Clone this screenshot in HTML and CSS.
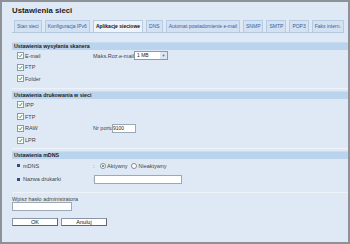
FILE: index.html
```html
<!DOCTYPE html>
<html lang="pl">
<head>
  <meta charset="UTF-8">
  <title>Ustawienia sieci</title>
  <link rel="stylesheet" href="styles.css">
</head>
<body>
  <div class="frame">
    <h1 class="title">Ustawienia sieci</h1>

    <div class="tabs">
      <span class="tab">Stan sieci</span>
      <span class="tab">Konfiguracja IPv6</span>
      <span class="tab active">Aplikacje sieciowe</span>
      <span class="tab">DNS</span>
      <span class="tab">Automat powiadomienie e-mail</span>
      <span class="tab">SNMP</span>
      <span class="tab">SMTP</span>
      <span class="tab">POP3</span>
      <span class="tab">Faks intern.</span>
    </div>

    <div class="section scan">
      <div class="section-head">Ustawienia wysyłania skanera</div>
      <div class="row">
        <span class="check"><svg width="6" height="6" viewBox="0 0 6 6"><path d="M1 3 L2.5 4.5 L5 1.2" fill="none" stroke="#2f9a2f" stroke-width="1.1"/></svg></span>
        <span class="label">E-mail</span>
        <span class="extra">Maks.Roz.e-mail</span>
        <span class="select">1 MB<span class="arrow">&#9660;</span></span>
      </div>
      <div class="row">
        <span class="check"><svg width="6" height="6" viewBox="0 0 6 6"><path d="M1 3 L2.5 4.5 L5 1.2" fill="none" stroke="#2f9a2f" stroke-width="1.1"/></svg></span>
        <span class="label">FTP</span>
      </div>
      <div class="row">
        <span class="check"><svg width="6" height="6" viewBox="0 0 6 6"><path d="M1 3 L2.5 4.5 L5 1.2" fill="none" stroke="#2f9a2f" stroke-width="1.1"/></svg></span>
        <span class="label">Folder</span>
      </div>
    </div>

    <div class="section print">
      <div class="section-head">Ustawienia drukowania w sieci</div>
      <div class="row">
        <span class="check"><svg width="6" height="6" viewBox="0 0 6 6"><path d="M1 3 L2.5 4.5 L5 1.2" fill="none" stroke="#2f9a2f" stroke-width="1.1"/></svg></span>
        <span class="label">IPP</span>
      </div>
      <div class="row">
        <span class="check"><svg width="6" height="6" viewBox="0 0 6 6"><path d="M1 3 L2.5 4.5 L5 1.2" fill="none" stroke="#2f9a2f" stroke-width="1.1"/></svg></span>
        <span class="label">FTP</span>
      </div>
      <div class="row">
        <span class="check"><svg width="6" height="6" viewBox="0 0 6 6"><path d="M1 3 L2.5 4.5 L5 1.2" fill="none" stroke="#2f9a2f" stroke-width="1.1"/></svg></span>
        <span class="label">RAW</span>
        <span class="extra port">Nr portu</span>
        <span class="field port-field">9100</span>
      </div>
      <div class="row">
        <span class="check"><svg width="6" height="6" viewBox="0 0 6 6"><path d="M1 3 L2.5 4.5 L5 1.2" fill="none" stroke="#2f9a2f" stroke-width="1.1"/></svg></span>
        <span class="label">LPR</span>
      </div>
    </div>

    <div class="section mdns">
      <div class="section-head">Ustawienia mDNS</div>
      <div class="row first">
        <span class="bullet"></span>
        <span class="label">mDNS</span>
        <span class="colon">:</span>
        <span class="radio on"></span><span class="radio-label">Aktywny</span>
        <span class="radio"></span><span class="radio-label">Nieaktywny</span>
      </div>
      <div class="row">
        <span class="bullet"></span>
        <span class="label">Nazwa drukarki</span>
        <span class="colon">:</span>
        <span class="field name-field"></span>
      </div>
    </div>

    <div class="login">
      <div class="login-label">Wpisz hasło administratora</div>
      <div class="field pass-field"></div>
      <div class="buttons">
        <span class="btn">OK</span>
        <span class="btn">Anuluj</span>
      </div>
    </div>
  </div>
</body>
</html>
```

FILE: styles.css
```css
html, body {
  margin: 0;
  padding: 0;
}
body {
  font-family: "Liberation Sans", Arial, sans-serif;
  color: #333;
  white-space: nowrap;
}
.frame {
  width: 350px;
  height: 244px;
  box-sizing: border-box;
  border: 2px solid #8d9299;
  background: #dfe9f5;
  padding-left: 10px;
  overflow: hidden;
}
.title {
  font-size: 7.8px;
  font-weight: bold;
  color: #222;
  margin: 0;
  padding-top: 3px;
  height: 14px;
  line-height: 12px;
}
.tabs {
  display: flex;
  gap: 3px;
  margin-right: 4px;
  padding-left: 2px;
  height: 13px;
  border-bottom: 1px solid #b3c7dd;
  align-items: flex-end;
}
.tab {
  flex-shrink: 0;
  font-size: 5px;
  height: 11px;
  line-height: 11px;
  padding: 0 2px;
  color: #3c5a9a;
  background: #d3e2f3;
  border: 1px solid #b5cbe2;
  border-bottom: none;
}
.tab.active {
  background: #eef3f9;
  color: #111;
  font-weight: bold;
}
.section {
  border-bottom: 1px solid #eef3fa;
}
.section-head {
  height: 7px;
  line-height: 7px;
  background: #b9d4ec;
  font-size: 5.3px;
  font-weight: bold;
  color: #222;
  padding-left: 2px;
  border-top: 1px solid #c9ddf0;
}
.scan {
  margin-top: 9px;
  padding-bottom: 3.5px;
}
.print {
  margin-top: 2px;
  padding-bottom: 2px;
}
.print .row {
  height: 11.75px;
}
.mdns {
  margin-top: 1.5px;
  padding-bottom: 6px;
}
.mdns .row {
  height: 13px;
}
.mdns .row.first {
  height: 14px;
}
.row {
  display: flex;
  align-items: center;
  height: 11.5px;
  font-size: 5.5px;
  color: #444;
  padding-left: 5px;
}
.check {
  flex-shrink: 0;
  width: 5px;
  height: 5px;
  border: 1px solid #8a9aab;
  background: #fff;
  display: flex;
  align-items: center;
  justify-content: center;
  box-sizing: content-box;
}
.check svg {
  width: 5px;
  height: 5px;
}
.label {
  margin-left: 1px;
  width: 68px;
}
.bullet {
  width: 3px;
  height: 3px;
  background: #2f4b8a;
  margin-right: 2px;
}
.mdns .label {
  width: 70px;
}
.extra {
  width: 41px;
}
.extra.port {
  width: 19px;
}
.select {
  width: 30px;
  height: 7px;
  line-height: 7px;
  border: 1px solid #8a9aab;
  background: #fff;
  padding-left: 2px;
  display: flex;
  justify-content: space-between;
  font-size: 5px;
  color: #222;
}
.arrow {
  width: 7px;
  background: #dde6f2;
  color: #5a6f99;
  font-size: 4px;
  text-align: center;
}
.field {
  height: 7px;
  line-height: 7px;
  border: 1px solid #9aa8b8;
  background: #fff;
  font-size: 5px;
  color: #222;
  box-sizing: content-box;
}
.port-field {
  width: 22px;
}
.colon {
  width: 2px;
  margin-right: -1px;
}
.radio {
  width: 4px;
  height: 4px;
  border: 1px solid #7f8c9c;
  border-radius: 50%;
  background: #fff;
  position: relative;
  margin-left: 6px;
  margin-right: 1px;
}
.radio + .radio-label + .radio {
  margin-left: 0;
}
.radio.on::after {
  content: "";
  position: absolute;
  left: 1px;
  top: 1px;
  width: 2px;
  height: 2px;
  border-radius: 50%;
  background: #2f9a2f;
}
.radio-label {
  margin-right: 4px;
}
.name-field {
  width: 86px;
}
.login {
  padding-top: 4px;
  font-size: 5.5px;
  color: #444;
}
.login-label {
  height: 5px;
  line-height: 5px;
}
.pass-field {
  width: 58px;
  height: 7px;
}
.buttons {
  display: flex;
  gap: 3px;
  margin-top: 7px;
}
.btn {
  width: 44px;
  height: 6px;
  line-height: 6px;
  text-align: center;
  background: #fff;
  border: 1px solid #8a96a6;
  border-right-color: #666;
  border-bottom-color: #666;
  color: #111;
}
```
